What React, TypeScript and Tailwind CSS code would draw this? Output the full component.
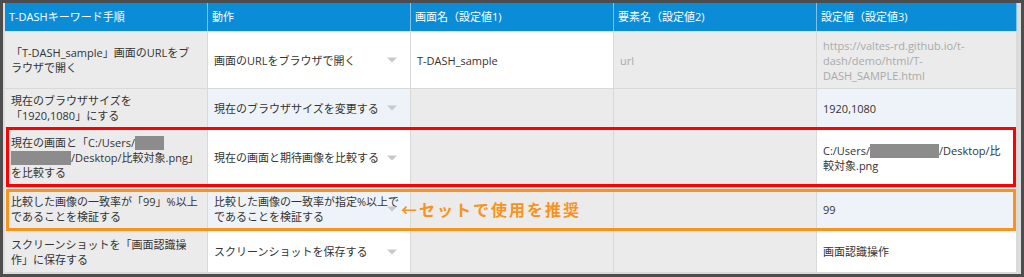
import type { ReactNode } from "react";

const GRAY = "bg-[#ebebeb]";
const WHITE = "bg-white";
const BLUE = "bg-[#eef3f9]";

const widths = ["w-[203px]", "w-[203px]", "w-[203px]", "w-[203px]", "w-[200px]"];

const Redact = ({ w }: { w: string }) => (
  <span className={`inline-block h-[14px] align-[-3px] bg-[#8c8c8c] ${w}`} />
);

const Arrow = () => (
  <span className="absolute right-[13px] top-1/2 -translate-y-1/2 w-0 h-0 border-l-[5px] border-r-[5px] border-t-[5px] border-l-transparent border-r-transparent border-t-[#c9c9c9]" />
);

type CellProps = { col: number; bg: string; children?: ReactNode; arrow?: boolean; muted?: boolean };

const Cell = ({ col, bg, children, arrow, muted }: CellProps) => (
  <div
    className={`relative flex items-center px-[6px] border-r border-b border-[#d9d9d9] ${widths[col]} ${bg} ${
      muted ? "text-[#aaaaaa]" : "text-[#333333]"
    }`}
  >
    <div className="leading-[15px]">{children}</div>
    {arrow && <Arrow />}
  </div>
);

const headers = ["T-DASHキーワード手順", "動作", "画面名（設定値1)", "要素名（設定値2)", "設定値（設定値3)"];

export default function App() {
  return (
    <div className="w-[1024px] h-[277px] p-[3px] bg-[#4d4d4d] font-['Open_Sans','Noto_Sans_CJK_JP',sans-serif] text-[11px]">
      <div className="h-full bg-[#dcdcdc] pl-[2px] pr-[4px] pb-[1px]">
        {/* header */}
        <div className="flex h-[29px] bg-[#0a8dd6] text-white border-b border-[#cfe6f4]">
          {headers.map((h, i) => (
            <div key={h} className={`flex items-center px-[4px] border-r border-[#7cc2ea] ${widths[i]}`}>
              {h}
            </div>
          ))}
        </div>

        {/* row 1 */}
        <div className="flex h-[57px]">
          <Cell col={0} bg={GRAY}>
            「T-DASH_sample」画面のURLをブ
            <br />
            ラウザで開く
          </Cell>
          <Cell col={1} bg={WHITE} arrow>
            画面のURLをブラウザで開く
          </Cell>
          <Cell col={2} bg={WHITE}>
            T-DASH_sample
          </Cell>
          <Cell col={3} bg={GRAY} muted>
            url
          </Cell>
          <Cell col={4} bg={GRAY} muted>
            https://valtes-rd.github.io/t-
            <br />
            dash/demo/html/T-
            <br />
            DASH_SAMPLE.html
          </Cell>
        </div>

        {/* row 2 */}
        <div className="flex h-[39px]">
          <Cell col={0} bg={GRAY}>
            現在のブラウザサイズを
            <br />
            「1920,1080」にする
          </Cell>
          <Cell col={1} bg={BLUE} arrow>
            現在のブラウザサイズを変更する
          </Cell>
          <Cell col={2} bg={GRAY} />
          <Cell col={3} bg={GRAY} />
          <Cell col={4} bg={BLUE}>
            1920,1080
          </Cell>
        </div>

        {/* row 3 */}
        <div className="relative flex h-[60px]">
          <Cell col={0} bg={GRAY}>
            現在の画面と「C:/Users/
            <Redact w="w-[29px]" />
            <br />
            <Redact w="w-[60px]" />
            /Desktop/比較対象.png」
            <br />
            を比較する
          </Cell>
          <Cell col={1} bg={WHITE} arrow>
            現在の画面と期待画像を比較する
          </Cell>
          <Cell col={2} bg={GRAY} />
          <Cell col={3} bg={GRAY} />
          <Cell col={4} bg={WHITE}>
            C:/Users/
            <Redact w="w-[69px]" />
            /Desktop/比
            <br />
            較対象.png
          </Cell>
          <div className="absolute inset-x-[1px] -top-[1px] bottom-[1px] border-[3px] border-[#ff0000] pointer-events-none" />
        </div>

        {/* row 4 */}
        <div className="relative flex h-[43px]">
          <Cell col={0} bg={GRAY}>
            比較した画像の一致率が「99」%以上
            <br />
            であることを検証する
          </Cell>
          <Cell col={1} bg={BLUE} arrow>
            比較した画像の一致率が指定%以上で
            <br />
            であることを検証する
          </Cell>
          <Cell col={2} bg={GRAY} />
          <Cell col={3} bg={GRAY} />
          <Cell col={4} bg={BLUE}>
            99
          </Cell>
          <div className="absolute inset-x-[1px] top-[1px] bottom-0 border-[3px] border-[#f8931d] pointer-events-none" />
          <div className="absolute left-[396px] top-1/2 -translate-y-1/2 text-[16px] font-bold tracking-[2px] text-[#f8931d] leading-none">
            ←セットで使用を推奨
          </div>
        </div>

        {/* row 5 */}
        <div className="flex h-[42px]">
          <Cell col={0} bg={GRAY}>
            スクリーンショットを「画面認識操
            <br />
            作」に保存する
          </Cell>
          <Cell col={1} bg={WHITE} arrow>
            スクリーンショットを保存する
          </Cell>
          <Cell col={2} bg={GRAY} />
          <Cell col={3} bg={GRAY} />
          <Cell col={4} bg={WHITE}>
            画面認識操作
          </Cell>
        </div>
      </div>
    </div>
  );
}
